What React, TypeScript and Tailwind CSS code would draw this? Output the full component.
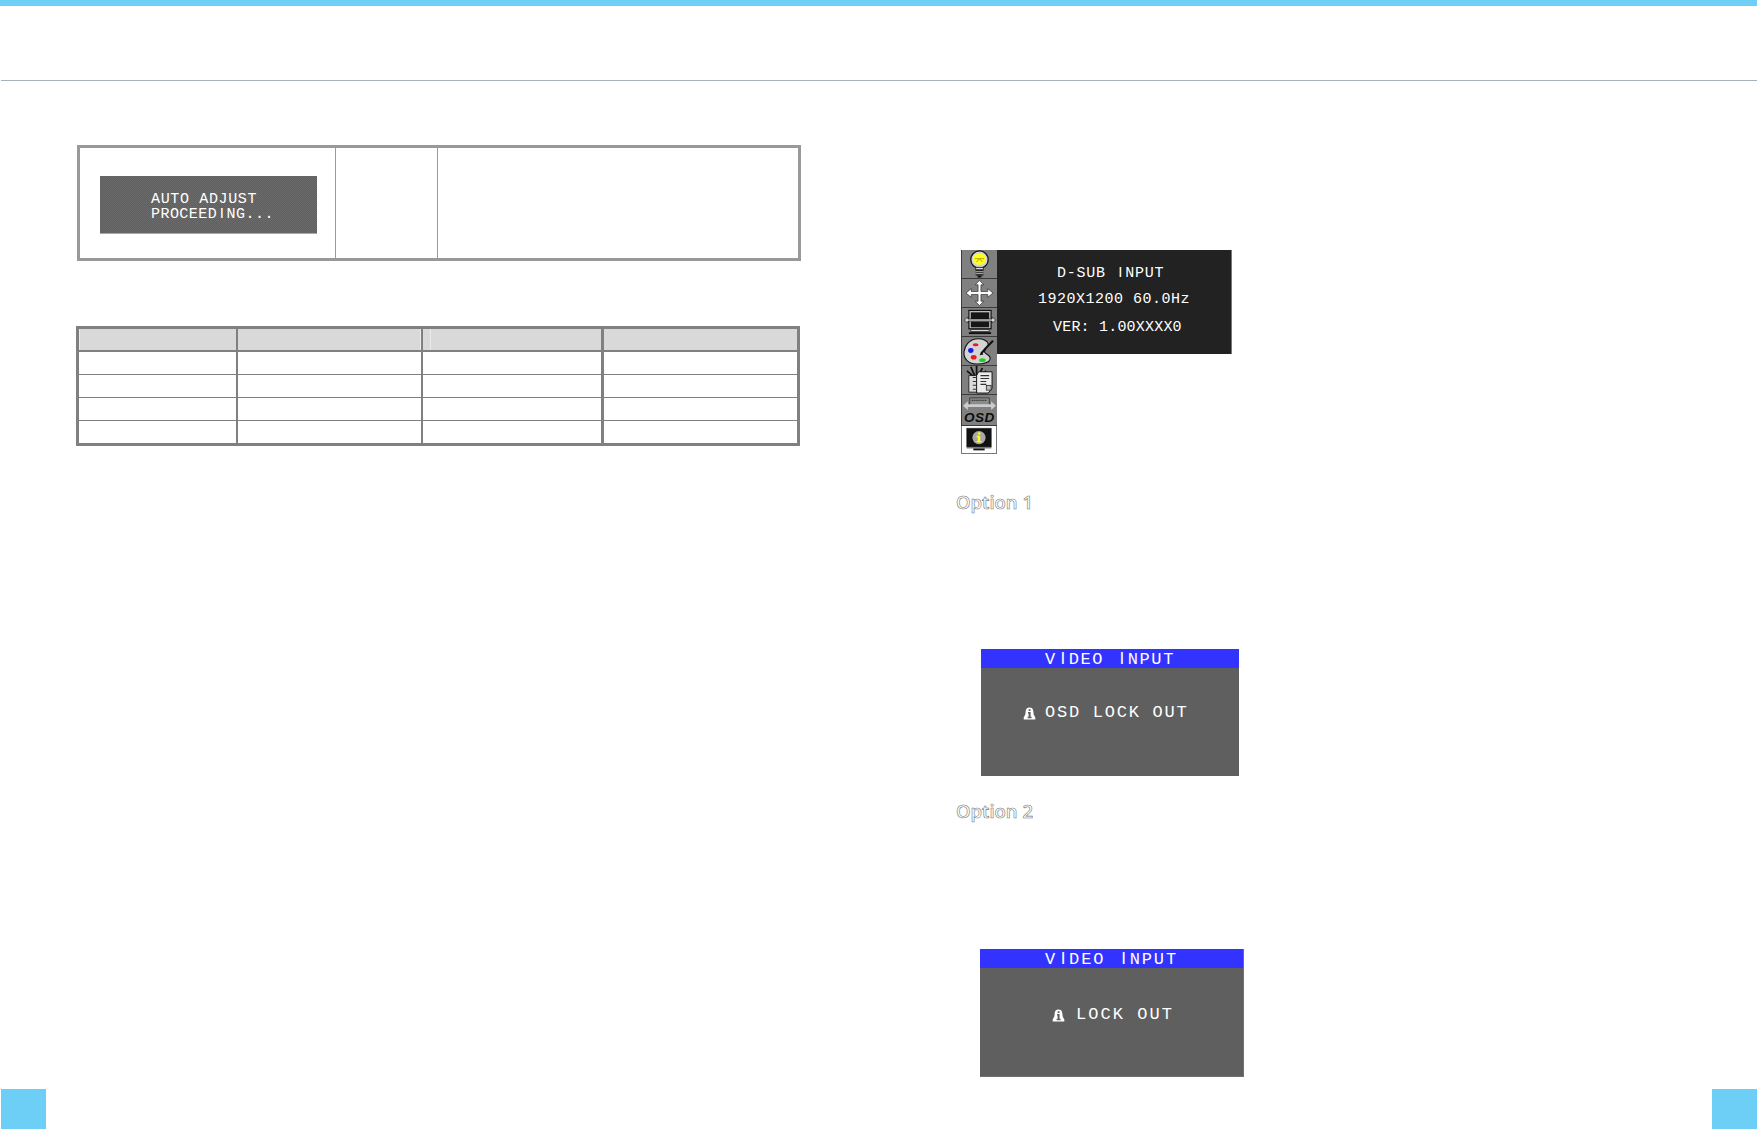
import React from "react";

const mono = "font-['Liberation_Mono',monospace]";

function OsdText({ text, cell }: { text: string; cell: string }) {
  return (
    <>
      {text.split("").map((ch, i) =>
        ch === "I" ? (
          <span key={i} className={`${cell} inline-block text-center font-['Liberation_Sans',sans-serif] tracking-normal`}>
            I
          </span>
        ) : (
          <React.Fragment key={i}>{ch}</React.Fragment>
        )
      )}
    </>
  );
}

function Bulb() {
  return (
    <svg viewBox="0 0 36 29" className="w-full h-full">
      <circle cx="18" cy="10" r="9" fill="#d4d4d4" stroke="#111" strokeWidth="1.300" />
      <ellipse cx="18" cy="9.500" rx="6.800" ry="6" fill="#ffff22" />
      <path d="M13 9h10M15 12.500l3-3.500 3 3.500" stroke="#a89800" strokeWidth="0.900" fill="none" />
      <path d="M14 18h8v2.500h-8z" fill="#d8d8d8" stroke="#111" strokeWidth="0.800" />
      <rect x="14" y="20.500" width="8" height="6" fill="#222" />
      <path d="M14 22.500h8M14 24.500h8" stroke="#cfcfcf" strokeWidth="0.900" />
      <rect x="16" y="26.500" width="4" height="2" fill="#111" />
    </svg>
  );
}

function Move() {
  return (
    <svg viewBox="0 0 36 29" className="w-full h-full">
      <path
        d="M18 1.500l4.500 4.500h-3v7h7v-3l5.500 4.500-5.500 4.500v-3h-7v7h3l-4.500 4.500-4.500-4.500h3v-7h-7v3l-5.500-4.500 5.500-4.500v3h7V6h-3z"
        fill="#fff"
        stroke="#2a2a2a"
        strokeWidth="0.700"
      />
    </svg>
  );
}

function Screen() {
  return (
    <svg viewBox="0 0 36 29" className="w-full h-full">
      <rect x="7" y="2.500" width="23" height="19" fill="#bdbdbd" stroke="#111" strokeWidth="1.200" />
      <rect x="9" y="4.500" width="19" height="7" fill="#161616" />
      <rect x="9" y="14" width="19" height="6" fill="#161616" />
      <path d="M2 12.500l4-3v2h25v-2l4 3-4 3v-2H6v2z" fill="#d8d8d8" stroke="#111" strokeWidth="0.600" />
      <rect x="9" y="22.500" width="19" height="2" fill="#e6e6e6" stroke="#111" strokeWidth="0.700" />
      <rect x="7" y="25" width="23" height="2" fill="#111" />
    </svg>
  );
}

function Palette() {
  return (
    <svg viewBox="0 0 36 29" className="w-full h-full">
      <path
        d="M14 2c7-1 13 2 13 6l-4 7c0 3 7 3 6 8-1 4-8 5-14 5-8 0-14-5-13-13C3 9 7 3 14 2z"
        fill="#d4d4d4"
        stroke="#111"
        strokeWidth="1.100"
      />
      <ellipse cx="14" cy="8" rx="3" ry="1.600" fill="#f01818" />
      <ellipse cx="9" cy="14" rx="2.800" ry="2.500" fill="#1818e8" />
      <ellipse cx="12" cy="21" rx="3" ry="2.400" fill="#f01818" />
      <ellipse cx="21" cy="24" rx="3.400" ry="2" fill="#18d818" />
      <path d="M20 17l4-5 8-8" stroke="#111" strokeWidth="2.200" fill="none" />
      <path d="M18 19l4-1-2-3z" fill="#111" />
    </svg>
  );
}

function Tools() {
  return (
    <svg viewBox="0 0 36 29" className="w-full h-full">
      <path d="M9 1l4 9M15 0v10M21 2l-4 8M5 5l7 6M25 5l-8 6" stroke="#111" strokeWidth="1.800" />
      <rect x="7" y="10" width="13" height="17" fill="#dcdcdc" stroke="#111" strokeWidth="0.800" />
      <path d="M17 6h14v17l-4 5H15V10z" fill="#ececec" stroke="#111" strokeWidth="1" />
      <path d="M19 10h9M19 13h9M19 16h6M19 19h6M15 12h-4M15 16h-4M15 20h-4M15 24h-4" stroke="#333" strokeWidth="1.100" />
      <rect x="25" y="20" width="5" height="5" fill="#bbb" stroke="#111" strokeWidth="0.700" />
    </svg>
  );
}

function Osd() {
  return (
    <svg viewBox="0 0 36 31" className="w-full h-full">
      <rect x="8" y="3" width="20" height="9" fill="#8c8c8c" stroke="#222" strokeWidth="0.700" />
      <path d="M10 5.500h16" stroke="#222" strokeWidth="1.200" strokeDasharray="1 1" />
      <path d="M1 11l5-4.500v3h24v-3l5 4.500-5 4.500v-3H6v3z" fill="#cccccc" />
      <text
        x="18"
        y="28"
        textAnchor="middle"
        fontFamily="Liberation Sans, sans-serif"
        fontWeight="700"
        fontStyle="italic"
        fontSize="14"
        letterSpacing="0.500"
        fill="#0c0c0c"
      >
        OSD
      </text>
    </svg>
  );
}

function Info() {
  return (
    <svg viewBox="0 0 36 28" className="w-full h-full">
      <rect x="5" y="2" width="26" height="20" fill="#111" stroke="#444" strokeWidth="0.600" />
      <circle cx="18" cy="12" r="7" fill="#a8a8a8" />
      <rect x="17" y="6.500" width="2.400" height="2.200" fill="#ffff20" />
      <path d="M15.500 10h3.800v5.500h1.200V17h-5v-1.500h1.300V11.500h-1.300z" fill="#ffff20" />
      <rect x="5" y="22" width="26" height="1.500" fill="#777" />
      <rect x="12" y="23.500" width="12" height="2" fill="#111" />
    </svg>
  );
}

function Bell() {
  return (
    <svg viewBox="0 0 13 13" className="w-[13px] h-[13px] shrink-0">
      <path d="M6.500.5c2 0 3.500 1.200 3.700 3l.5 4 1.600 3v2H.7v-2l1.600-3 .5-4C3 1.700 4.500.5 6.500.5z" fill="#fff" />
      <rect x="5.700" y="2.200" width="1.800" height="1.800" fill="#5f5f5f" />
      <path d="M5 5h2.600v4.800h1v1.400h-4V9.800h1V6.400H5z" fill="#5f5f5f" />
    </svg>
  );
}

const railRows = [
  { h: "h-[29px]", icon: <Bulb /> },
  { h: "h-[29px]", icon: <Move /> },
  { h: "h-[29px]", icon: <Screen /> },
  { h: "h-[29px]", icon: <Palette /> },
  { h: "h-[29px]", icon: <Tools /> },
  { h: "h-[31px]", icon: <Osd /> },
];

function Rail() {
  return (
    <div className="w-[36px] flex flex-col shrink-0">
      {railRows.map((r, i) => (
        <div key={i} className={`${r.h} bg-[#808080] border-b border-l border-[#3a3a3a] overflow-hidden`}>
          {r.icon}
        </div>
      ))}
      <div className="h-[28px] bg-white border-l border-r border-b border-[#777]">
        <Info />
      </div>
    </div>
  );
}

function OptionLabel({ children }: { children: React.ReactNode }) {
  return (
    <div className="h-[26px] leading-[26px] text-[18.5px] font-semibold text-white opacity-[0.99] font-['Open_Sans',sans-serif] [-webkit-text-stroke:0.6px_#777777]">
      {children}
    </div>
  );
}

const headerCols = ["w-[159px] border-r-2", "w-[185px] border-r-2", "w-[181px] border-r-[3px]", "flex-1"];

function SpecRow({ className }: { className: string }) {
  return (
    <div className={`flex ${className}`}>
      {headerCols.map((c, i) => (
        <div key={i} className={`${c} border-[#808080] h-full`} />
      ))}
    </div>
  );
}

export default function App() {
  return (
    <div className="h-[1129px] flex flex-col bg-white overflow-hidden">
      <div className="h-[6px] bg-[#6dcff6]" />
      <div className="h-[74px]" />
      <div className="h-px ml-px bg-[#a9b1bc]" />

      <main className="flex flex-1">
        {/* left page */}
        <section className="w-[956px] shrink-0 pt-[64px]">
          <div className="ml-[77px] w-[724px] h-[116px] border-[3px] border-[#999999] flex">
            <div className="w-[256px] border-r border-[#999999] pl-[20px] pt-[28px]">
              <div className="w-[217px] h-[58px] border-b border-[#a8a8a8] pt-[17px] pl-[51px] bg-[repeating-conic-gradient(#5f5f5f_0_25%,#6b6b6b_0_50%)] bg-[length:2px_2px]">
                <div className={`${mono} text-[15px] leading-[13px] tracking-[0.45px] text-white whitespace-pre`}>
                  <span className="tracking-[0.65px]">AUTO ADJUST</span>
                  <br />
                  <OsdText text="PROCEEDING..." cell="w-[9.450px]" />
                </div>
              </div>
            </div>
            <div className="w-[102px] border-r border-[#999999]" />
            <div className="flex-1" />
          </div>

          <div className="ml-[76px] mt-[65px] w-[724px] h-[120px] border-[3px] border-[#808080] flex flex-col">
            <div className="flex h-[23px] border-b-2 border-[#808080] bg-[#d9d9d9]">
              <div className="w-[159px] h-full border-r-2 border-[#808080]">
                <div className="h-full border-l border-[#ececec]" />
              </div>
              <div className="w-[185px] h-full border-r-2 border-[#808080]">
                <div className="h-full border-r border-[#ececec]" />
              </div>
              <div className="w-[181px] h-full border-r-[3px] border-[#808080]">
                <div className="h-full ml-[7px] border-l border-[#ececec]" />
              </div>
              <div className="flex-1" />
            </div>
            <SpecRow className="h-[23px] border-b border-[#808080]" />
            <SpecRow className="h-[23px] border-b border-[#808080]" />
            <SpecRow className="h-[23px] border-b border-[#808080]" />
            <SpecRow className="h-[22px]" />
          </div>
        </section>

        {/* right page */}
        <section className="flex-1 pt-[169px]">
          <div className="ml-[5px] flex">
            <Rail />
            <div className={`w-[235px] h-[104px] bg-[#222222] border-r border-[#777] text-white ${mono} text-[15px] whitespace-pre`}>
              <div className="mt-[12px] h-[20px] leading-[20px] ml-[60px] tracking-[0.75px]">
                D-SUB <OsdText text="INPUT" cell="w-[9.750px]" />
              </div>
              <div className="h-[36px] leading-[36px] ml-[41px] tracking-[0.5px]">1920X1200 60.0Hz</div>
              <div className="h-[20px] leading-[20px] ml-[56px] tracking-[0.2px]">VER: 1.00XXXX0</div>
            </div>
          </div>

          <div className="mt-[35px]">
            <OptionLabel>Option 1</OptionLabel>
          </div>

          <div className="mt-[134px] ml-[25px] w-[258px] h-[127px] bg-[#5f5f5f] flex flex-col">
            <div className={`h-[19px] pt-px leading-[17px] bg-[#3333ff] text-white text-center ${mono} text-[17px] tracking-[1.6px] whitespace-pre`}>
              <OsdText text="VIDEO INPUT" cell="w-[11.800px]" />
            </div>
            <div className={`mt-[36px] h-[18px] flex items-center text-white ${mono} text-[17px] tracking-[1.75px] whitespace-pre`}>
              <div className="ml-[42px] mr-[9px]"><Bell /></div>
              <span>OSD LOCK OUT</span>
            </div>
          </div>

          <div className="mt-[22px]">
            <OptionLabel>Option 2</OptionLabel>
          </div>

          <div className="mt-[125px] ml-[24px] w-[264px] h-[128px] bg-[#5f5f5f] border-b border-r border-[#707070] flex flex-col">
            <div className={`h-[19px] pt-[2px] leading-[16px] bg-[#3333ff] text-white text-center ${mono} text-[17px] tracking-[1.9px] whitespace-pre`}>
              <OsdText text="VIDEO INPUT" cell="w-[12.100px]" />
            </div>
            <div className={`mt-[38px] h-[18px] flex items-center text-white ${mono} text-[17px] tracking-[2.050px] whitespace-pre`}>
              <div className="ml-[72px] mr-[11px]"><Bell /></div>
              <span>LOCK OUT</span>
            </div>
          </div>
        </section>
      </main>

      <footer className="flex justify-between h-[40px] shrink-0">
        <div className="ml-px w-[45px] bg-[#6dcff6]" />
        <div className="w-[45px] bg-[#6dcff6]" />
      </footer>
    </div>
  );
}
